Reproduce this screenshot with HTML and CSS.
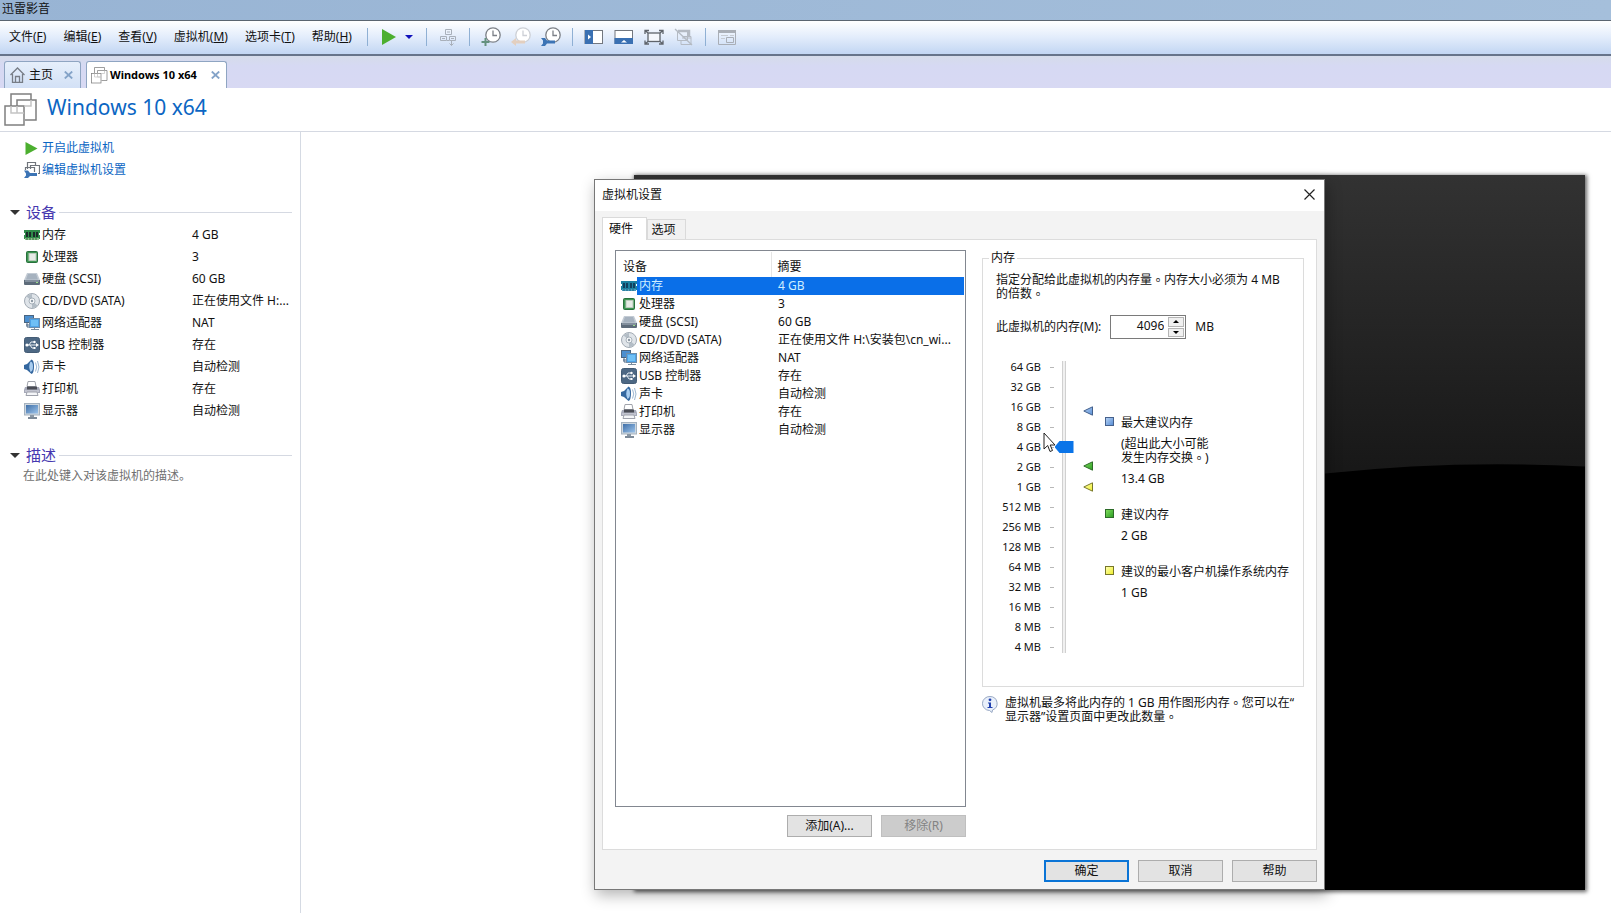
FILE: index.html
```html
<!DOCTYPE html>
<html lang="zh-CN">
<head>
<meta charset="utf-8">
<title>Windows 10 x64</title>
<link rel="stylesheet" href="styles.css">
</head>
<body>
<svg class="defs" width="0" height="0" aria-hidden="true">
  <defs>
    <linearGradient id="g-screen" x1="0" y1="0" x2="1" y2="1"><stop offset="0" stop-color="#3f6fa8"/><stop offset="1" stop-color="#9cc3ea"/></linearGradient>
    <linearGradient id="g-blue" x1="0" y1="0" x2="1" y2="1"><stop offset="0" stop-color="#b4d0f2"/><stop offset="1" stop-color="#5a8fd6"/></linearGradient>
    <linearGradient id="g-green" x1="0" y1="0" x2="1" y2="1"><stop offset="0" stop-color="#7edc5c"/><stop offset="1" stop-color="#2f9e25"/></linearGradient>
    <linearGradient id="g-yellow" x1="0" y1="0" x2="1" y2="1"><stop offset="0" stop-color="#ffffb0"/><stop offset="1" stop-color="#eeee30"/></linearGradient>
    <linearGradient id="g-glass" x1="0" y1="0" x2="0" y2="1"><stop offset="0" stop-color="#323232"/><stop offset=".7" stop-color="#181818"/><stop offset="1" stop-color="#141414"/></linearGradient>
    <symbol id="i-memory" viewBox="0 0 16 16">
      <path d="M0 3h16v3h-1v2h1v4H0V8h1V6H0z" fill="#2f8a49"/>
      <path d="M2 5h2v5H2zM5 5h2v5H5zM9 5h2v5H9zM12 5h2v5h-2z" fill="#1c2b2a"/>
      <path d="M1 11h14v2H1z" fill="#8fc18b"/><path d="M3 11v2M6 11v2M9 11v2M12 11v2" stroke="#2d6a3a"/>
    </symbol>
    <symbol id="i-memory-sel" viewBox="0 0 16 16">
      <path d="M0 3h16v3h-1v2h1v4H0V8h1V6H0z" fill="#1c80a0"/>
      <path d="M2 5h2v5H2zM5 5h2v5H5zM9 5h2v5H9zM12 5h2v5h-2z" fill="#12405f"/>
      <path d="M1 11h14v2H1z" fill="#4a9fc0"/><path d="M3 11v2M6 11v2M9 11v2M12 11v2" stroke="#16607f"/>
    </symbol>
    <symbol id="i-cpu" viewBox="0 0 16 16">
      <rect x="2.5" y="2.5" width="11" height="11" rx="1" fill="#3d9552" stroke="#28703c"/>
      <rect x="5" y="4.500" width="7" height="7" fill="#e6ebe6" stroke="#b9c9ba"/>
    </symbol>
    <symbol id="i-disk" viewBox="0 0 16 16">
      <path d="M3 2h10l3 7H0z" fill="#c3cbd4"/><path d="M4 3h8l2 5.500H2z" fill="#a6b2bf"/>
      <path d="M0 9h16v4q0 1-1 1H1q-1 0-1-1z" fill="#5d6b7a"/><path d="M1 10h14" stroke="#a9b4c0"/><rect x="12" y="11" width="2" height="1" fill="#9be08a"/>
    </symbol>
    <symbol id="i-cd" viewBox="0 0 16 16">
      <circle cx="8" cy="8" r="7.500" fill="#dfe4e9" stroke="#a2abb4"/>
      <path d="M8 8L2.500 3.500A7 7 0 0 1 8 1zM8 8l5.500 4.500A7 7 0 0 1 8 15z" fill="#b3bdc6"/>
      <circle cx="8" cy="8" r="3" fill="#f6f8fa" stroke="#98a3ad" stroke-width=".8"/><circle cx="8" cy="8" r="1.200" fill="#8d99a4"/>
    </symbol>
    <symbol id="i-network" viewBox="0 0 16 16">
      <rect x="0.500" y="0.500" width="9" height="7" fill="#4b8fd0" stroke="#4a6581"/><path d="M3 8v4h3M2 10h3" stroke="#4a6581" fill="none"/>
      <rect x="5.500" y="3.500" width="10" height="9" fill="#4ea3e6" stroke="#6d8dab"/><path d="M7 5h7v6H7z" fill="#6fc0f6"/>
      <path d="M7 14.500h8M10.500 13v2" stroke="#7b8c9c"/>
    </symbol>
    <symbol id="i-usb" viewBox="0 0 16 16">
      <rect x="0.500" y="0.500" width="15" height="15" rx="2" fill="#4d6884" stroke="#445c75"/>
      <path d="M2 8h11M5 8l2-3h3M6 8l2 3h2" stroke="#e8eef4" fill="none"/><circle cx="3" cy="8" r="1.600" fill="#fff"/><path d="M12 6l3 2-3 2z" fill="#fff"/><circle cx="10.500" cy="5" r="1.200" fill="#fff"/><rect x="9.500" y="10" width="2" height="2" fill="#fff"/>
    </symbol>
    <symbol id="i-sound" viewBox="0 0 16 16">
      <path d="M0 6l3-1 4.500-4.500Q10 1 10 7.500T7.500 15L3 11l-3-1z" fill="#34679f"/><path d="M6.500 2.500q-2.500 5 0 10.500 2.500-1 2.500-5.500T6.500 2.500z" fill="#a9cdf0"/>
      <path d="M11.500 3.500q2.500 4.500 0 9M13.500 2q3 6 0 12" stroke="#9db7d2" fill="none"/>
    </symbol>
    <symbol id="i-printer" viewBox="0 0 16 16">
      <path d="M4 0.500h7l1 5H3z" fill="#fff" stroke="#a0a3ab"/>
      <path d="M1 6h14l1 3v3H0V9z" fill="#a6a9b8"/><path d="M3 5.500h10v3H3z" fill="#4a4c55"/><path d="M1 10h14" stroke="#dcdde6"/>
      <path d="M3 11h10l1 3.500H2z" fill="#f4f5f8" stroke="#9ea1ab"/>
    </symbol>
    <symbol id="i-display" viewBox="0 0 16 16">
      <rect x="0.500" y="0.500" width="15" height="11.500" fill="#cfd8e0" stroke="#a5b2bf"/><rect x="2" y="2" width="12" height="8.500" fill="url(#g-screen)"/>
      <path d="M6 12h4v2H6z" fill="#8b98a5"/><path d="M4 15h9" stroke="#7d8a98" stroke-width="2"/>
    </symbol>
    <symbol id="i-play" viewBox="0 0 16 16"><path d="M1 0l14 8-14 8z" fill="#4caf2f"/></symbol>
    <symbol id="i-vm" viewBox="0 0 34 34">
      <g fill="none" stroke="#7f7f7f" stroke-width="1.500"><path d="M7 13V1h20v6"/><path d="M13 13V7h19v20H21"/><rect x="1" y="13" width="19" height="19"/></g>
      <path d="M7 13v7h13M13 13v7M13 20h7M20 13h7V7" fill="none" stroke="#c4c4c4" stroke-width="1.500"/>
    </symbol>
    <symbol id="i-clock" viewBox="0 0 20 20"><circle cx="12" cy="8" r="7.200" fill="#fff" stroke="currentColor" stroke-width="1.300"/><path d="M12 3.500V8.500h4" fill="none" stroke="currentColor" stroke-width="1.300"/></symbol>
  </defs>
</svg>

<div class="app">
  <header class="titlebar">迅雷影音</header>

  <div class="menubar">
    <nav class="menus">
      <button type="button">文件(<u>F</u>)</button>
      <button type="button">编辑(<u>E</u>)</button>
      <button type="button">查看(<u>V</u>)</button>
      <button type="button">虚拟机(<u>M</u>)</button>
      <button type="button">选项卡(<u>T</u>)</button>
      <button type="button">帮助(<u>H</u>)</button>
    </nav>
    <div class="tools">
      <span class="sep"></span>
      <span class="power">
        <button type="button" class="tool" aria-label="开启"><svg width="16" height="16"><use href="#i-play"/></svg></button>
        <button type="button" class="drop" aria-label="电源选项"><svg width="8" height="4" viewBox="0 0 8 4"><path d="M0 0h8L4 4z" fill="#1111bb"/></svg></button>
      </span>
      <span class="sep"></span>
      <button type="button" class="tool" aria-label="发送按键"><svg width="20" height="20" viewBox="0 0 20 20" fill="none" stroke="#a9b0ba"><path d="M7.500 2.500h6v5h-6zM2.500 9.500h6v4h-6zM11.500 9.500h6v4h-6zM9 5h3M4 11.500h3M13 11.500h3M9 13.500h2M13.500 13.500v5M11.500 16.500l2 2 2-2"/></svg></button>
      <span class="sep"></span>
      <button type="button" class="tool clock" aria-label="拍摄快照"><svg width="20" height="20" viewBox="0 0 20 20"><use href="#i-clock"/><path d="M4.500 11v8M.5 15h8" stroke="#64917f" stroke-width="2"/></svg></button>
      <button type="button" class="tool clock off" aria-label="恢复快照"><svg width="20" height="20" viewBox="0 0 20 20"><use href="#i-clock"/><path d="M0 15l5-4v2.500h9v3H5V19z" fill="#e3cfbf"/></svg></button>
      <button type="button" class="tool clock" aria-label="管理快照"><svg width="20" height="20" viewBox="0 0 20 20"><use href="#i-clock"/><path d="M0 11h4l2 2.500h8v3H6L4 19H0l2-2.500v-3z" fill="#3c74b5"/></svg></button>
      <span class="sep"></span>
      <button type="button" class="tool" aria-label="显示库"><svg width="20" height="20" viewBox="0 0 20 20"><rect x="1" y="3.500" width="17.500" height="13" fill="#fff" stroke="#72777f"/><path d="M1 3h8v14H1z" fill="#3a70b2"/><path d="M4 7.500l3 2.500-3 2.500z" fill="#fff"/></svg></button>
      <button type="button" class="tool" aria-label="显示缩略图栏"><svg width="20" height="20" viewBox="0 0 20 20"><rect x="1" y="3.500" width="17.500" height="13" fill="#fff" stroke="#72777f"/><path d="M.5 11h18.500v6H.5z" fill="#3a70b2"/><path d="M7 15.500l3-2.500 3 2.500z" fill="#fff"/></svg></button>
      <button type="button" class="tool" aria-label="全屏"><svg width="20" height="20" viewBox="0 0 20 20" fill="none" stroke="#5f646b" stroke-width="1.300"><rect x="4" y="6" width="12" height="8.500" fill="#f4f7fc"/><path d="M1 7V3.500h4M19 7V3.500h-4M1 13.500V17h4M19 13.500V17h-4M1 3.500l3 2.500M19 3.500l-3 2.500M1 17l3-2.500M19 17l-3-2.500"/></svg></button>
      <button type="button" class="tool" aria-label="Unity"><svg width="20" height="20" viewBox="0 0 20 20" fill="none" stroke="#b4bac3"><path d="M3.500 4.500v9h10v-9M9 9.500h8v8H7v-4M8 11h9"/><path d="M1 2l17 16" stroke-width="1.300"/><path d="M4 4h11v5" stroke-width="2.500"/></svg></button>
      <span class="sep"></span>
      <button type="button" class="tool" aria-label="控制台"><svg width="20" height="20" viewBox="0 0 20 20" fill="none" stroke="#a9aeb6"><path d="M1.500 3.500h17v14h-17z"/><path d="M1 4.500h18" stroke-width="3"/><path d="M4 8.500h7M4 11.500h4M13 8.500h4" stroke="#c6cbd2"/><path d="M9.500 10.500h7v5h-7z"/></svg></button>
    </div>
  </div>

  <div class="tabstrip">
    <div class="doctab">
      <svg width="15" height="16" viewBox="0 0 15 16" fill="none" stroke="#777d86" stroke-width="1.300"><path d="M.5 8l7-7 7 7M2.500 7v8.300h10V7M5.500 15V9.500h4V15"/></svg>
      <span>主页</span>
      <button type="button" class="x push" aria-label="关闭主页"><svg width="9" height="8" viewBox="0 0 9 8"><path d="M.8.5l7.400 7M8.200.5l-7.400 7" stroke="#84a3c8" stroke-width="1.800"/></svg></button>
    </div>
    <div class="doctab active">
      <svg width="17" height="17"><use href="#i-vm"/></svg>
      <span>Windows 10 x64</span>
      <button type="button" class="x push" aria-label="关闭 Windows 10 x64"><svg width="9" height="8" viewBox="0 0 9 8"><path d="M.8.5l7.400 7M8.200.5l-7.400 7" stroke="#84a3c8" stroke-width="1.800"/></svg></button>
    </div>
  </div>

  <div class="vmhead">
    <svg width="34" height="34"><use href="#i-vm"/></svg>
    <h1>Windows 10 x64</h1>
  </div>

  <div class="body">
    <aside class="side">
      <a class="cmd" href="#"><svg width="15" height="13" viewBox="0 0 15 13"><path d="M1 0l12 6.500L1 13z" fill="#4caf2f"/></svg><span>开启此虚拟机</span></a>
      <a class="cmd" href="#"><svg width="16" height="16" viewBox="0 0 16 16"><path d="M3.500 7V.5h8V3M6.500 7V3.500h9v8H14M1.500 8V5.500h9V10" fill="none" stroke="#6f747b" stroke-width="1.200"/><path d="M0 8.500h4l2 2.500h7v3H6l-2 2H0l2-2.500v-2z" fill="#3c74b5"/></svg><span>编辑虚拟机设置</span></a>

      <h2><i class="tri"></i>设备<i class="line"></i></h2>
      <dl class="devs">
        <dt><svg width="16" height="16"><use href="#i-memory"/></svg>内存</dt><dd>4 GB</dd>
        <dt><svg width="16" height="16"><use href="#i-cpu"/></svg>处理器</dt><dd>3</dd>
        <dt><svg width="16" height="16"><use href="#i-disk"/></svg>硬盘 (SCSI)</dt><dd>60 GB</dd>
        <dt><svg width="16" height="16"><use href="#i-cd"/></svg>CD/DVD (SATA)</dt><dd>正在使用文件 H:...</dd>
        <dt><svg width="16" height="16"><use href="#i-network"/></svg>网络适配器</dt><dd>NAT</dd>
        <dt><svg width="16" height="16"><use href="#i-usb"/></svg>USB 控制器</dt><dd>存在</dd>
        <dt><svg width="16" height="16"><use href="#i-sound"/></svg>声卡</dt><dd>自动检测</dd>
        <dt><svg width="16" height="16"><use href="#i-printer"/></svg>打印机</dt><dd>存在</dd>
        <dt><svg width="16" height="16"><use href="#i-display"/></svg>显示器</dt><dd>自动检测</dd>
      </dl>

      <h2><i class="tri"></i>描述<i class="line"></i></h2>
      <p class="hint">在此处键入对该虚拟机的描述。</p>
    </aside>

    <main class="stage">
      <div class="screen">
        <svg viewBox="0 0 951 716" preserveAspectRatio="none"><rect width="951" height="716" fill="#000"/><path d="M0 0H951V292Q820 285 691 299 340 330 0 420z" fill="url(#g-glass)"/></svg>
      </div>

      <section class="dialog" role="dialog" aria-labelledby="dlg-title">
        <header class="dlg-head">
          <span id="dlg-title">虚拟机设置</span>
          <button type="button" class="x" aria-label="关闭"><svg width="11" height="11" viewBox="0 0 11 11"><path d="M.5.5l10 10M10.500.5l-10 10" stroke="#222" stroke-width="1.200"/></svg></button>
        </header>
        <div class="dlg-body">
          <div class="pages" role="tablist">
            <button type="button" role="tab" class="page on" aria-selected="true">硬件</button>
            <button type="button" role="tab" class="page" aria-selected="false">选项</button>
          </div>
          <div class="panel">
            <div class="left">
              <div class="list">
                <table>
                  <colgroup><col class="c-ico"><col class="c-dev"><col></colgroup>
                  <thead><tr><th colspan="2">设备</th><th>摘要</th></tr></thead>
                  <tbody>
                    <tr class="sel"><td><svg width="16" height="16"><use href="#i-memory-sel"/></svg></td><td>内存</td><td>4 GB</td></tr>
                    <tr><td><svg width="16" height="16"><use href="#i-cpu"/></svg></td><td>处理器</td><td>3</td></tr>
                    <tr><td><svg width="16" height="16"><use href="#i-disk"/></svg></td><td>硬盘 (SCSI)</td><td>60 GB</td></tr>
                    <tr><td><svg width="16" height="16"><use href="#i-cd"/></svg></td><td>CD/DVD (SATA)</td><td>正在使用文件 H:\安装包\cn_wi...</td></tr>
                    <tr><td><svg width="16" height="16"><use href="#i-network"/></svg></td><td>网络适配器</td><td>NAT</td></tr>
                    <tr><td><svg width="16" height="16"><use href="#i-usb"/></svg></td><td>USB 控制器</td><td>存在</td></tr>
                    <tr><td><svg width="16" height="16"><use href="#i-sound"/></svg></td><td>声卡</td><td>自动检测</td></tr>
                    <tr><td><svg width="16" height="16"><use href="#i-printer"/></svg></td><td>打印机</td><td>存在</td></tr>
                    <tr><td><svg width="16" height="16"><use href="#i-display"/></svg></td><td>显示器</td><td>自动检测</td></tr>
                  </tbody>
                </table>
              </div>
              <div class="actions">
                <button type="button" class="btn">添加(A)...</button>
                <button type="button" class="btn" disabled>移除(R)</button>
              </div>
            </div>

            <div class="right">
              <fieldset class="group">
                <legend>内存</legend>
                <p>指定分配给此虚拟机的内存量<span class="stop" lang="zh-TW">。</span>内存大小必须为 4 MB<br>的倍数<span class="stop" lang="zh-TW">。</span></p>
                <div class="amount">
                  <label for="mem">此虚拟机的内存(M):</label>
                  <span class="spin">
                    <input id="mem" type="text" inputmode="numeric" value="4096">
                    <span class="steps">
                      <button type="button" aria-label="增加"><svg width="6" height="3" viewBox="0 0 6 3"><path d="M0 3h6L3 0z"/></svg></button>
                      <button type="button" aria-label="减少"><svg width="6" height="3" viewBox="0 0 6 3"><path d="M0 0h6L3 3z"/></svg></button>
                    </span>
                  </span>
                  <span>MB</span>
                </div>
                <div class="gauge">
                  <ol class="scale">
                    <li>64 GB</li><li>32 GB</li><li>16 GB</li><li>8 GB</li><li>4 GB</li><li>2 GB</li><li>1 GB</li><li>512 MB</li><li>256 MB</li><li>128 MB</li><li>64 MB</li><li>32 MB</li><li>16 MB</li><li>8 MB</li><li>4 MB</li>
                  </ol>
                  <input class="slider" type="range" min="0" max="14" value="10" aria-label="内存大小">
                  <div class="marks">
                    <svg style="top:17%" width="10" height="10" viewBox="0 0 10 10"><path d="M.8 5L9.500.8v8.400z" fill="url(#g-blue)" stroke="#43608c"/></svg>
                    <svg style="top:36%" width="10" height="10" viewBox="0 0 10 10"><path d="M.8 5L9.500.8v8.400z" fill="url(#g-green)" stroke="#2d6b28"/></svg>
                    <svg style="top:43%" width="10" height="10" viewBox="0 0 10 10"><path d="M.8 5L9.500.8v8.400z" fill="url(#g-yellow)" stroke="#77772a"/></svg>
                  </div>
                  <dl class="key">
                    <dt><i class="sw blue"></i>最大建议内存</dt>
                    <dd class="note">(超出此大小可能<br>发生内存交换<span class="stop" lang="zh-TW">。</span>)</dd>
                    <dd>13.4 GB</dd>
                    <dt><i class="sw green"></i>建议内存</dt>
                    <dd>2 GB</dd>
                    <dt><i class="sw yellow"></i>建议的最小客户机操作系统内存</dt>
                    <dd>1 GB</dd>
                  </dl>
                </div>
              </fieldset>
              <div class="info">
                <svg width="16" height="17" viewBox="0 0 16 17"><path d="M8 .5a7.300 7 0 0 1 2.500 13.500L10 16.500 7.500 14.500A7.300 7 0 0 1 8 .5z" fill="#e9f0fb" stroke="#98a8c4"/><circle cx="8" cy="3.800" r="1.400" fill="#2141b0"/><path d="M6 6.500h3V11h1.500v1h-5v-1H7V7.500H6z" fill="#2141b0"/></svg>
                <p>虚拟机最多将此内存的 1 GB 用作图形内存<span class="stop" lang="zh-TW">。</span>您可以在“<br>显示器”设置页面中更改此数量<span class="stop" lang="zh-TW">。</span></p>
              </div>
            </div>
          </div>
          <footer class="dlg-foot">
            <button type="button" class="btn default">确定</button>
            <button type="button" class="btn">取消</button>
            <button type="button" class="btn">帮助</button>
          </footer>
        </div>
        <svg class="pointer" width="13" height="21" viewBox="0 0 13 21"><path d="M1 1v16l3.700-3.500L7 19.500l2.500-1-2.300-5.500H12z" fill="#fff" stroke="#222"/></svg>
      </section>
    </main>
  </div>
</div>
</body>
</html>
```
FILE: styles.css
```css
* { box-sizing: border-box; }
body {
  margin: 0;
  font: 12px/16px "Noto Sans", "Noto Sans CJK SC", sans-serif;
  color: #111;
  background: #fff;
}
button, input { font: inherit; color: inherit; margin: 0; }
button { padding: 0; border: 0; background: none; }
h1, h2, p, dl, dd, ol { margin: 0; padding: 0; font-weight: normal; }
svg { display: block; flex: none; }
.defs { position: absolute; }

.app { display: flex; flex-direction: column; min-height: 100vh; }

.titlebar {
  height: 21px;
  padding-left: 2px;
  border-bottom: 1px solid #5b6570;
  background: linear-gradient(90deg, #98b4d4, #a5bfdb);
  line-height: 18px;
}

.menubar {
  display: flex;
  align-items: center;
  gap: 14px;
  height: 35px;
  padding: 0 0 2px 9px;
  border-bottom: 2px solid #66748a;
  background: linear-gradient(#fff, #e2ecfb 50%, #c2d6f3);
}
.menus { display: flex; gap: 17px; white-space: nowrap; }
.tools { display: flex; align-items: center; gap: 10px; }
.sep { width: 3px; height: 18px; background: linear-gradient(#8fb0d4, #8fb0d4) center / 1px 100% no-repeat; }
.power { display: flex; }
.tool { width: 20px; height: 20px; display: flex; align-items: center; justify-content: center; }
.drop { width: 16px; display: flex; align-items: center; justify-content: flex-end; padding-right: 2px; }
.clock { color: #7c8087; }
.clock.off { color: #cdd0d6; }

.tabstrip {
  display: flex;
  align-items: flex-end;
  gap: 5px;
  height: 32px;
  padding-left: 4px;
  background: linear-gradient(#d5dcea, #d6d9f3 30%, #d8d9f3);
}
.doctab {
  display: flex;
  align-items: center;
  gap: 4px;
  height: 27px;
  width: 77px;
  padding: 0 7px 0 5px;
  border: 1px solid #8fa5c2;
  border-bottom: 0;
  border-radius: 3px 3px 0 0;
  background: linear-gradient(#e6effb, #d3e1f6);
}
.doctab.active { width: 141px; gap: 2px; padding: 0 6px 0 4px; background: #fff; font-weight: bold; color: #000; }
.doctab.active span { font-size: 11px; }
.push { margin-left: auto; }

.vmhead {
  display: flex;
  align-items: center;
  gap: 9px;
  height: 44px;
  padding-left: 4px;
  border-bottom: 1px solid #d5d9e2;
}
.vmhead h1 { font-size: 21px; line-height: 28px; color: #0b66c3; padding-bottom: 6px; }

.body { flex: 1; display: flex; }
.side { flex: none; width: 301px; padding: 5px 8px 24px 0; border-right: 1px solid #d5dae3; }
.cmd { display: flex; align-items: center; height: 22px; padding-left: 24px; color: #0b66c3; text-decoration: none; }
.cmd span { margin-left: 2px; }
.cmd svg { width: 16px; }
.side h2 { display: flex; align-items: center; height: 24px; margin-top: 19px; padding-left: 10px; font-size: 15px; color: #4638b0; }
.devs + h2 { margin-top: 21px; }
.tri { border: 5px solid transparent; border-top-color: #333; border-bottom: 0; margin-right: 6px; }
.line { flex: 1; height: 1px; margin-left: 3px; background: #d5d9e2; }
.devs { display: grid; grid-template-columns: 168px 1fr; grid-auto-rows: 22px; align-items: center; padding-left: 24px; white-space: nowrap; }
.devs dt { display: flex; align-items: center; gap: 2px; }
.hint { padding: 1px 0 0 23px; color: #707070; }

.stage { flex: 1; position: relative; display: flex; padding: 43px 26px 23px 333px; }
.screen { flex: 1; position: relative; box-shadow: 1px 1px 4px 1px #666; }
.screen svg { position: absolute; inset: 0; width: 100%; height: 100%; }

.dialog {
  position: absolute;
  top: 47px;
  bottom: 23px;
  left: 293px;
  width: 731px;
  display: flex;
  flex-direction: column;
  border: 1px solid #777;
  background: #f3f3f3;
  box-shadow: 2px 5px 14px rgba(0, 0, 0, .3);
}
.dlg-head { display: flex; align-items: center; justify-content: space-between; height: 31px; padding: 0 9px 2px 7px; background: #fff; }
.dlg-body { flex: 1; display: flex; flex-direction: column; padding: 6px 7px 7px 7px; }
.pages { display: flex; align-items: flex-end; height: 22px; }
.page { height: 20px; width: 39px; padding: 0 6px 0 0; border: 1px solid #dadada; border-bottom: 0; background: #f1f1f1; }
.page.on { position: relative; height: 23px; width: 45px; margin-bottom: -1px; padding: 0 7px 0 0; background: #fff; }
.panel { flex: 1; display: flex; gap: 16px; padding: 10px 12px 12px 12px; border: 1px solid #dcdcdc; background: #fff; }
.left { width: 351px; display: flex; flex-direction: column; gap: 8px; }
.list { flex: 1; border: 1px solid #828790; padding: 1px; }
.list table { width: 100%; border-collapse: collapse; table-layout: fixed; white-space: nowrap; }
.c-ico { width: 20px; }
.c-dev { width: 134px; }
.list th { height: 25px; padding: 4px 0 0 6px; text-align: left; font-weight: normal; }
.list th + th { border-left: 1px solid #e5e5e5; }
.list td { height: 18px; padding: 0 0 0 2px; line-height: 18px; }
.list td:first-child { padding-left: 4px; }
.list td:last-child { padding-left: 7px; }
.sel td + td { background: #0a6fe8; color: #cfeeff; }
.actions { display: flex; justify-content: flex-end; gap: 9px; }
.btn { width: 85px; height: 22px; border: 1px solid #adadad; background: #e3e3e3; }
.btn:disabled { background: #cccccc; border-color: #bfbfbf; color: #838383; }
.btn.default { border: 2px solid #0a74d6; }

.right { flex: 1; display: flex; flex-direction: column; gap: 9px; line-height: 14px; padding: 1px 0 113px; }
.group { flex: 1; min-width: 0; margin: 0; padding: 8px 8px 0 13px; border: 1px solid #dcdcdc; }
.group legend { margin-left: -7px; padding: 0 2px; }
.stop { display: inline-block; height: 14px; vertical-align: top; font-family: "Noto Sans CJK TC", sans-serif; }
.amount { display: flex; align-items: center; gap: 9px; margin-top: 14px; }
.spin { display: flex; width: 76px; height: 24px; padding: 1px; border: 1px solid #7a7a7a; background: #fff; }
.spin input { flex: 1; min-width: 0; border: 0; padding: 0 4px 2px 0; text-align: right; background: none; }
.steps { display: flex; flex-direction: column; width: 16px; gap: 1px; }
.steps button { flex: 1; display: flex; align-items: center; justify-content: center; border: 1px solid #b5b5b5; background: #f0f0f0; }
.gauge { display: flex; margin-top: 18px; }
.scale { list-style: none; width: 58px; font-size: 11px; line-height: 20px; text-align: right; }
.scale li { padding-right: 13px; background: linear-gradient(#b8b8b8, #b8b8b8) right 0 center / 4px 1px no-repeat; }
.slider {
  appearance: none;
  writing-mode: vertical-lr;
  direction: rtl;
  width: 20px;
  height: 292px;
  margin: 4px 0 0;
  background: linear-gradient(90deg, #d0d0d0 1px, #f0f0f0 1px, #f0f0f0 3px, #d0d0d0 3px) 8px 0 / 4px 100% no-repeat;
}
.slider::-webkit-slider-thumb {
  appearance: none;
  width: 19px;
  height: 12px;
  background: #0a74e8;
  clip-path: polygon(0 50%, 5px 0, 100% 0, 100% 100%, 5px 100%);
}
.marks { position: relative; width: 10px; margin: 4px 12px 0 9px; height: 292px; }
.marks svg { position: absolute; left: 0; transform: translateY(-50%); }
.key { padding-top: 59px; white-space: nowrap; }
.key dt { display: flex; align-items: center; gap: 7px; height: 14px; }
.key dd + dt { margin-top: 22px; }
.key dd { margin: 7px 0 0 16px; }
.sw { width: 9px; height: 9px; margin-bottom: 3px; border: 1px solid #46618c; background: linear-gradient(135deg, #b4d0f2, #5a8fd6); }
.sw.green { border-color: #2d6b28; background: linear-gradient(135deg, #7edc5c, #2f9e25); }
.sw.yellow { border-color: #77772a; background: linear-gradient(135deg, #ffffb0, #eeee30); }
.info { display: flex; gap: 7px; white-space: nowrap; }
.dlg-foot { display: flex; justify-content: flex-end; gap: 9px; margin-top: 10px; }
.pointer { position: absolute; left: 448px; top: 252px; }
```
